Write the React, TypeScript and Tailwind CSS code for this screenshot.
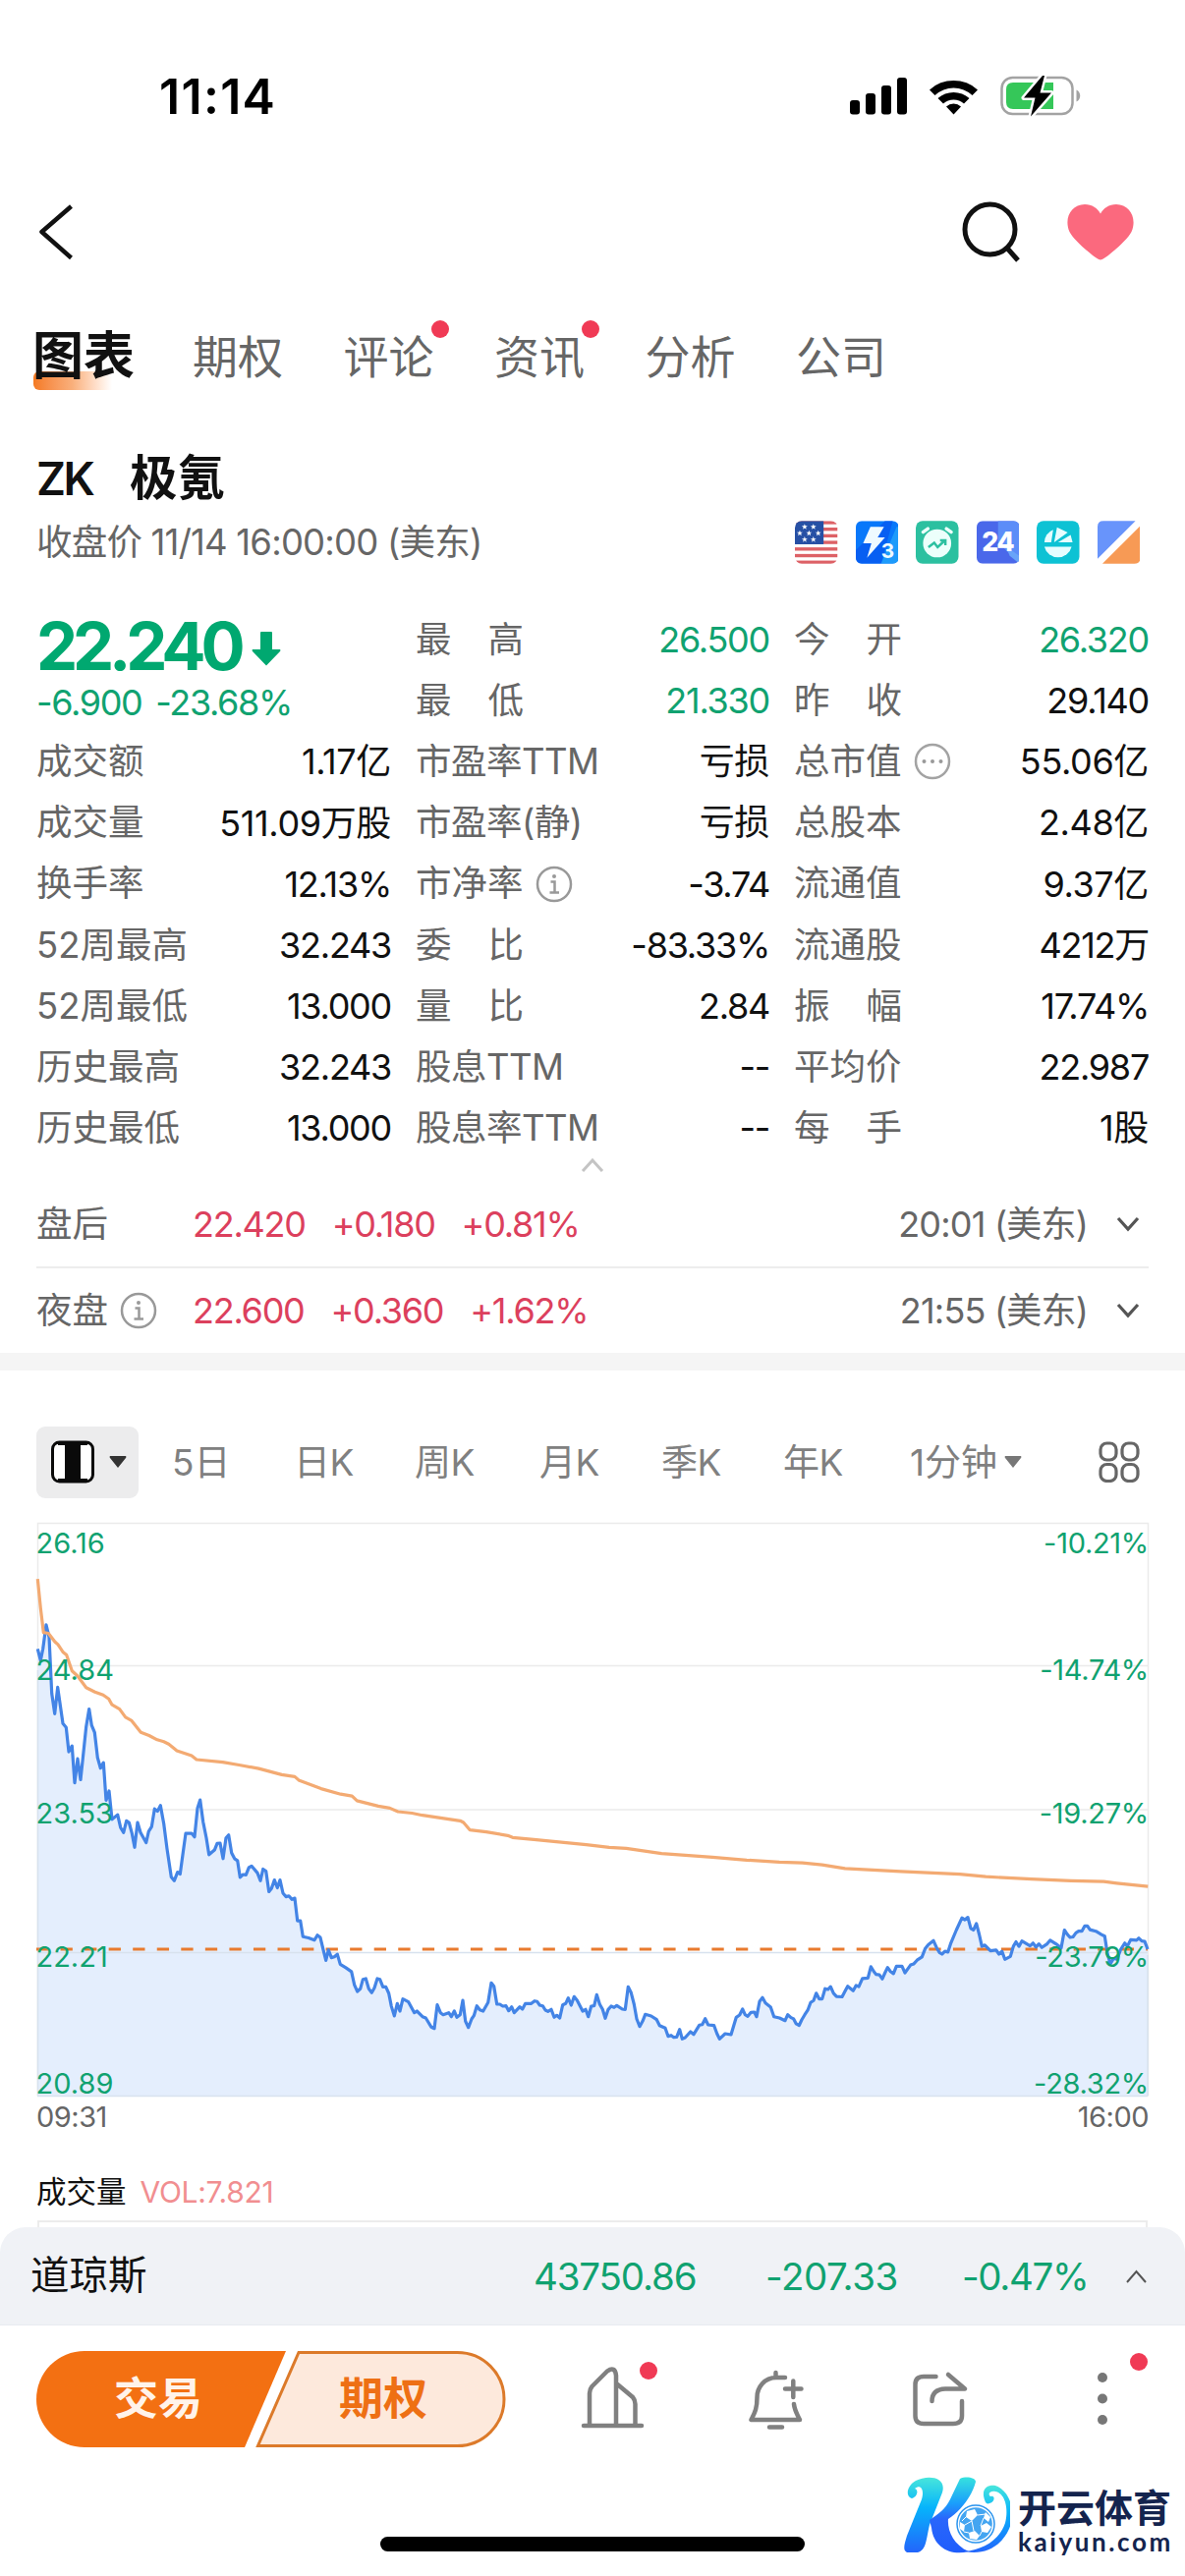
import React from "react";

type Pair = [number, number];

/* ---------- chart data ---------- */

// Each run stores samples on its own grid: origin, scale and "x,y" samples.
type Run = { x: number; y: number; sx: number; sy: number; d: string };

const priceRuns: Run[] = [
  {
    x: 0, y: 1530, sx: 3, sy: 2.529,
    d: "115,375 124,405 131,375 141,313 150,345 158,490 167,542 176,474 192,567 202,577 210,640 220,625 228,720 237,658 246,712 254,648 263,575 272,530 280,572 289,590 298,655 307,682 316,668 324,765 333,741 342,814 359,802 368,835 377,848 386,818 394,822 403,850 411,886 420,822 429,848 446,874 454,845 463,833 472,787 481,793 490,778 500,825 510,890 523,962 532,972 542,950 550,955 558,905 567,850 585,850 594,859 603,785 611,764 620,820 630,862 638,905 655,893 663,876 672,875 681,915 690,862 698,854 707,900 716,915 725,920 733,963 742,956 751,957 760,938 768,934 786,952 795,972 803,942 812,947 821,1000 829,992 838,970 847,990 855,970 864,1004 873,1013 882,1011 891,1020 900,1017 908,1075 917,1075 925,1116 942,1119 960,1125 969,1112 978,1118 987,1150 995,1177 1003,1150 1012,1170 1021,1168 1030,1161 1039,1187 1056,1196 1073,1206 1082,1240 1091,1257 1100,1250 1108,1226 1117,1224 1126,1250 1135,1260 1143,1248 1152,1224 1160,1226 1169,1245 1178,1245 1187,1262 1195,1295 1204,1320",
  },
  {
    x: 400, y: 1700, sx: 3, sy: 3,
    d: "13,1018 21,1041 30,1004 47,1013 65,1046 73,1041 90,1058 100,1062 117,1090 126,1094 135,1022 145,1046 153,1052 170,1046 178,1058 187,1041 195,1060 205,1052 213,1008 221,1072 230,1091 240,1065 247,1055 256,1025 265,1037 275,1041 290,1015 300,955 308,965 317,1020 326,1020 335,1026 345,1025 353,1040 362,1028 370,1046 387,1028 395,1035 404,1018 422,1018 432,1010 440,1012 448,1023 457,1025 465,1038 473,1042 483,1036 492,1060 500,1054 509,1062 518,1022 527,1018 535,1001 544,1023 553,997 562,1008 579,1041 588,1036 596,1058 605,1026 614,1025 622,991 631,1020 640,1036 648,1063 657,1036 666,1026 675,1030 683,1024 700,1035 709,1036 718,967 727,985 736,1020 744,1065 753,1088 762,1072 770,1051 788,1056 805,1067 814,1085 831,1093 840,1118 849,1115 857,1121 866,1120 875,1097 883,1126 892,1122 908,1104 918,1112 935,1084 944,1082 953,1064 962,1083 980,1085 989,1110 997,1126 1014,1110 1032,1113 1048,1060 1058,1053 1067,1035 1075,1052 1083,1057 1093,1045 1103,1044 1110,1058 1119,1012 1128,1000 1137,1016 1153,1029 1163,1058 1180,1062 1197,1070",
  },
  {
    x: 800, y: 1530, sx: 3, sy: 2.412,
    d: "5,1256 15,1263 23,1266 31,1278 40,1282 48,1268 57,1256 66,1245 75,1226 84,1221 92,1203 101,1217 110,1217 119,1192 128,1194 136,1187 145,1203 154,1211 171,1212 180,1198 188,1186 205,1197 214,1184 222,1187 233,1167 250,1166 259,1138 268,1150 275,1157 285,1158 294,1168 302,1153 310,1140 319,1150 328,1155 337,1137 354,1137 363,1153 372,1143 380,1134 390,1131 400,1122 415,1114 425,1093 434,1084 450,1074 460,1092 468,1103 476,1107 485,1100 494,1102 503,1080 520,1048 537,1018 546,1023 555,1017 564,1044 572,1048 581,1032 590,1060 598,1088 607,1085 624,1099 641,1097 650,1107 659,1100 668,1120 685,1113 694,1088 702,1077 711,1088 720,1075 745,1087 754,1080 763,1090 772,1082 781,1091 797,1082 806,1073 824,1082 840,1092 850,1048 858,1058 867,1066 876,1065 885,1055 893,1051 903,1051 912,1038 920,1038 928,1047 946,1051 963,1059 973,1063 981,1105 990,1131 1000,1118 1010,1120 1022,1095 1034,1080 1042,1088 1052,1072 1070,1073 1077,1068 1086,1075 1095,1076 1104,1095",
  },
];

const averageRuns: Run[] = [
  {
    x: 0, y: 1530, sx: 3, sy: 2.529,
    d: "115,195 124,270 133,333 148,335 168,357 177,364 193,384 203,391 220,432 237,445 263,475 290,486 315,494 332,504 342,519 365,530 383,551 402,560 430,590 455,598 480,609 500,614 515,620 540,637 585,650 600,660 680,667 730,674 790,683 860,699 900,704 912,713 980,735 1040,749 1075,754 1090,766 1155,780 1190,785 1215,794 1258,798",
  },
  {
    x: 400, y: 1700, sx: 3, sy: 3,
    d: "90,443 205,460 215,465 235,488 285,494 350,505 365,511 430,517 590,533 660,541 712,544 820,560 975,571 1080,580 1180,586",
  },
  {
    x: 800, y: 1530, sx: 3, sy: 2.412,
    d: "50,883 110,888 180,897 350,904 530,911 610,917 750,923 870,927 970,929 1010,933 1105,941",
  },
];

const toPoints = (runs: Run[]) =>
  runs
    .flatMap((r) =>
      r.d.split(" ").map((p) => {
        const [a, b] = p.split(",").map(Number);
        return `${(r.x + a / r.sx).toFixed(1)},${(r.y + b / r.sy).toFixed(1)}`;
      })
    )
    .join(" ");

const price = toPoints(priceRuns);
const average = toPoints(averageRuns);

const axis: { y: number; left: string; right: string }[] = [
  { y: 1580.5, left: "26.16", right: "-10.21%" },
  { y: 1710, left: "24.84", right: "-14.74%" },
  { y: 1856, left: "23.53", right: "-19.27%" },
  { y: 2001.5, left: "22.21", right: "-23.79%" },
  { y: 2130.5, left: "20.89", right: "-28.32%" },
];

function Chart() {
  return (
    <svg width="1206" height="636" viewBox="0 1540 1206 636" className="block shrink-0 overflow-visible">
      <g stroke="#ebebeb" strokeWidth="1.5" fill="none">
        <path d="M38.500 1550.500H1168.500V2133H38.500Z" />
        <path d="M38 1695.500H1168M38 1842H1168" />
      </g>
      <polygon points={`38.5,2133 ${price} 1168,2133`} fill="#e4eefd" />
      <path d="M38 1987.500H1168M38 2133.500H1168M38.500 1700V2133M1168 1990V2133" stroke="#d8e2ee" strokeWidth="1.5" />
      <path d="M37 1984H1168" stroke="#e87a2e" strokeWidth="3.200" strokeDasharray="12.300 12.250" />
      <polyline points={price} fill="none" stroke="#4384e6" strokeWidth="3.200" strokeLinejoin="round" />
      <polyline points={average} fill="none" stroke="#f3aa72" strokeWidth="3.200" strokeLinejoin="round" />
      <g fontSize="29" fill="#10a270">
        {axis.map((a) => (
          <React.Fragment key={a.left}>
            <text x="36.500" y={a.y}>{a.left}</text>
            <text x="1169" y={a.y} textAnchor="end" letterSpacing="-0.3">{a.right}</text>
          </React.Fragment>
        ))}
      </g>
      <g fontSize="29" letterSpacing="-0.5" fill="#666">
        <text x="37" y="2165">09:31</text>
        <text x="1169" y="2165" textAnchor="end">16:00</text>
      </g>
    </svg>
  );
}

/* ---------- small icons ---------- */

function InfoIcon() {
  return (
    <svg width="38" height="38" viewBox="0 0 38 38" fill="none" stroke="#999" strokeWidth="2.500">
      <circle cx="19" cy="19" r="17" />
      <path d="M15.500 16.500H19.500V27M14.500 27.500H24" />
      <circle cx="19" cy="11" r="2" fill="#999" stroke="none" />
    </svg>
  );
}

function DotsIcon() {
  return (
    <svg width="38" height="38" viewBox="0 0 38 38" fill="#999">
      <circle cx="19" cy="19" r="17" fill="none" stroke="#a3a3a3" strokeWidth="2.500" />
      <circle cx="10.500" cy="19" r="2" />
      <circle cx="19" cy="19" r="2" />
      <circle cx="27.500" cy="19" r="2" />
    </svg>
  );
}

function Chevron() {
  return (
    <svg width="24" height="16" viewBox="0 0 24 16" fill="none" stroke="#555" strokeWidth="3.200">
      <path d="M2 2L12 13L22 2" />
    </svg>
  );
}

function Badges() {
  return (
    <div className="flex gap-[18px]">
      <svg width="43.500" height="44" viewBox="0 0 44 44">
        <clipPath id="flag"><rect width="44" height="44" rx="7" /></clipPath>
        <g clipPath="url(#flag)">
          <rect width="44" height="44" fill="#fff" />
          {[0, 6.8, 13.6, 20.4, 27.2, 34, 40.8].map((y) => (
            <rect key={y} y={y} width="44" height="3.400" fill="#dd6166" />
          ))}
          <rect width="29.500" height="24" fill="#2650a5" />
          {([[10, 6], [19, 6], [5, 12.5], [14.5, 12.5], [24, 12.5], [10, 19], [19, 19]] as Pair[]).map(([x, y]) => (
            <path key={`${x}-${y}`} transform={`translate(${x} ${y})`} fill="#fff"
              d="M0 -3L.8 -.9L3 -.9L1.200 .5L1.900 2.700L0 1.300L-1.900 2.700L-1.200 .5L-3 -.9L-.8 -.9Z" />
          ))}
        </g>
      </svg>
      <svg width="43.500" height="44" viewBox="0 0 44 44">
        <clipPath id="bolt"><rect width="44" height="44" rx="6" /></clipPath>
        <g clipPath="url(#bolt)">
          <rect width="44" height="44" fill="#0878fa" />
          <path d="M0 30L30 0H38L26 44H0Z" fill="#075ff2" />
          <path d="M42 6L26 44H44V6Z" fill="#1d9bfb" />
          <path d="M15 6H29L22.500 17H30L11.500 38L16 23H7.500Z" fill="#effaff" />
        </g>
        <text x="26" y="38.500" fontSize="21" fontWeight="700" fill="#effaff">3</text>
      </svg>
      <svg width="43.500" height="44" viewBox="0 0 44 44">
        <rect width="44" height="44" rx="7" fill="#2cc0a0" />
        <circle cx="22" cy="23" r="14.500" fill="#ecfffb" />
        <path d="M7.500 11.500L12.500 8M36.500 11.500L31.500 8" stroke="#ecfffb" strokeWidth="3.500" strokeLinecap="round" />
        <path d="M13 27L19 22.500L22.500 27L29.500 20.500M25 20H30.500V25" fill="none" stroke="#2cc0a0" strokeWidth="2.500" />
      </svg>
      <svg width="43.500" height="44" viewBox="0 0 44 44">
        <clipPath id="day"><rect width="44" height="44" rx="6" /></clipPath>
        <g clipPath="url(#day)">
          <rect width="44" height="44" fill="#4a68ea" />
          <path d="M22 0H44V44L22 22Z" fill="#5c8df8" />
          <path d="M30 26L44 36V44L34 36Z" fill="#69a4f8" />
        </g>
        <text x="21.500" y="31.500" fontSize="27" fontWeight="800" fill="#fff" textAnchor="middle" letterSpacing="-1.500">24</text>
      </svg>
      <svg width="43.500" height="44" viewBox="0 0 44 44">
        <rect width="44" height="44" rx="7" fill="#0dc2d4" />
        <g fill="#e6fdff">
          <path d="M8 22A14 14 0 0 1 17 9L15 22Z" />
          <path d="M21 6.500L32 12L18 22Z" />
          <path d="M22 22L35 14.500L37 22Z" />
          <path d="M8 26.500H36A14.500 14.500 0 0 1 22 37.500A14.500 14.500 0 0 1 8 26.500Z" />
        </g>
      </svg>
      <svg width="43.500" height="44" viewBox="0 0 44 44">
        <path d="M6 0H39L0 39V6Q0 0 6 0Z" fill="#6894fb" />
        <path d="M44 5V38Q44 44 38 44H5Z" fill="#f79a55" />
      </svg>
    </div>
  );
}

/* ---------- quote table ---------- */

type Stat = { label: string; value: string; green?: boolean; cjk?: boolean; icon?: "info" | "dots" };

const middle: Stat[] = [
  { label: "最 高", value: "26.500", green: true },
  { label: "最 低", value: "21.330", green: true },
  { label: "市盈率TTM", value: "亏损", cjk: true },
  { label: "市盈率(静)", value: "亏损", cjk: true },
  { label: "市净率", value: "-3.74", icon: "info" },
  { label: "委 比", value: "-83.33%" },
  { label: "量 比", value: "2.84" },
  { label: "股息TTM", value: "--" },
  { label: "股息率TTM", value: "--" },
];
const left: Stat[] = [
  { label: "成交额", value: "1.17亿", cjk: true },
  { label: "成交量", value: "511.09万股", cjk: true },
  { label: "换手率", value: "12.13%" },
  { label: "52周最高", value: "32.243" },
  { label: "52周最低", value: "13.000" },
  { label: "历史最高", value: "32.243" },
  { label: "历史最低", value: "13.000" },
];
const right: Stat[] = [
  { label: "今 开", value: "26.320", green: true },
  { label: "昨 收", value: "29.140" },
  { label: "总市值", value: "55.06亿", cjk: true, icon: "dots" },
  { label: "总股本", value: "2.48亿", cjk: true },
  { label: "流通值", value: "9.37亿", cjk: true },
  { label: "流通股", value: "4212万" },
  { label: "振 幅", value: "17.74%" },
  { label: "平均价", value: "22.987" },
  { label: "每 手", value: "1股", cjk: true },
];

function StatRow({ label, value, green, cjk, icon }: Stat) {
  const parts = label.split(" ");
  return (
    <div className="flex h-[62.150px] items-center justify-between whitespace-nowrap text-[36px] leading-none">
      <div className="flex items-center gap-[12px] text-[#666]">
        {parts.length === 2 ? (
          <span className="flex w-[110px] justify-between text-[36.500px]">
            <span>{parts[0]}</span>
            <span>{parts[1]}</span>
          </span>
        ) : (
          <span className={/[A-Z(]/.test(label) ? "tracking-[-0.5px] text-[36.500px]" : "text-[36.500px]"}>{label}</span>
        )}
        {icon === "info" && <InfoIcon />}
        {icon === "dots" && <DotsIcon />}
      </div>
      <span className={`${green ? "text-[#10a270]" : "text-[#111]"} ${cjk ? "tracking-[-0.010em]" : "tracking-[-0.035em]"}`}>{value}</span>
    </div>
  );
}

function ExtendedRow({ name, info, values, time }: { name: string; info?: boolean; values: string[]; time: string }) {
  return (
    <div className="flex h-[86px] items-center justify-between whitespace-nowrap text-[36px] leading-none text-[#666]">
      <div className="flex items-center">
        <div className="flex w-[159px] items-center gap-[12px]">
          <span className="text-[36.500px]">{name}</span>
          {info && <InfoIcon />}
        </div>
        <div className="flex gap-[27px] tracking-[-0.035em] text-[#dc405d]">
          {values.map((v) => <span key={v}>{v}</span>)}
        </div>
      </div>
      <div className="flex items-center gap-[29px] pr-[9px]">
        <span className="tracking-[-0.8px]">{time}</span>
        <Chevron />
      </div>
    </div>
  );
}

/* ---------- header ---------- */

function StatusBar() {
  return (
    <div className="flex h-[196px] shrink-0 items-center justify-between pl-[162px] pr-[104px]">
      <span className="text-[50px] font-semibold leading-none tracking-[1.300px] text-black">11:14</span>
      <svg width="238" height="44" viewBox="864 76 238 44">
        <g>
          <rect x="865" y="102" width="10" height="14.500" rx="3" />
          <rect x="881" y="95" width="10" height="21.500" rx="3" />
          <rect x="897" y="87" width="10" height="29.500" rx="3" />
          <rect x="913" y="79" width="10" height="37.500" rx="3" />
        </g>
        <g>
          <path d="M946 91.500A36 36 0 0 1 995 91.500L989.500 97A28 28 0 0 0 951.500 97Z" strokeLinejoin="round" />
          <path d="M954.500 100A24 24 0 0 1 986.500 100L981 105.500A16 16 0 0 0 960 105.500Z" />
          <path d="M963 108.500A11 11 0 0 1 978 108.500L970.500 116.500Z" />
        </g>
        <rect x="1019.500" y="79" width="72" height="37" rx="11" fill="none" stroke="#a3a3a3" strokeWidth="2.500" />
        <path d="M1095.500 91.500C1100.500 93.500 1100.500 101.500 1095.500 103.500Z" fill="#a3a3a3" />
        <path d="M1031 84H1072V111H1031Q1024 111 1024 104V91Q1024 84 1031 84Z" fill="#35c759" />
        <path d="M1061 77L1042 99.500H1053.500L1049 118.500L1070 94.500H1058.500L1063 77Z" fill="#000" stroke="#fff" strokeWidth="5" paintOrder="stroke" strokeLinejoin="round" />
      </svg>
    </div>
  );
}

function NavBar() {
  return (
    <div className="flex h-[80px] shrink-0 items-center justify-between pl-[38px] pr-[51px]">
      <svg width="38" height="60" viewBox="0 0 38 60" fill="none" stroke="#111" strokeWidth="4.500">
        <path d="M34.500 4L4.500 30L34.500 56.500" strokeLinejoin="round" />
      </svg>
      <div className="flex items-center gap-[46px]">
        <svg width="60" height="62" viewBox="0 0 60 62" fill="none" stroke="#111" strokeWidth="5">
          <circle cx="28.500" cy="28.500" r="25.500" />
          <path d="M46 47.500L57 60" />
        </svg>
        <svg width="70" height="58" viewBox="0 0 70 58" fill="#fb697e">
          <path d="M35 57.500C31 57.500 8 38 3.500 29C-2.500 15.500 5 1 19 1C26.500 1 32 5 35 10.500C38 5 43.500 1 51 1C65 1 72.500 15.500 66.500 29C62 38 39 57.500 35 57.500Z" />
        </svg>
      </div>
    </div>
  );
}

function Dot({ className }: { className: string }) {
  return <span className={`absolute size-[18px] rounded-full bg-[#f03a55] ${className}`} />;
}

function Tabs() {
  const tabs = ["期权", "评论", "资讯", "分析", "公司"];
  return (
    <div className="flex h-[172px] shrink-0 items-center pl-[34px] pt-[2px] leading-none">
      <div className="relative w-[162px]">
        <span className="absolute -bottom-[8px] left-0 h-[19px] w-[80px] rounded-l-[6px] bg-linear-to-r from-[#f47a20] via-[#f9b07c] to-white" />
        <span className="relative -ml-[1px] text-[52px] font-bold text-[#111]">图表</span>
      </div>
      <div className="flex gap-[61.500px] text-[46px] text-[#666]">
        {tabs.map((t, i) => (
          <span key={t} className="relative">
            {t}
            {(i === 1 || i === 2) && <Dot className="-right-[15px] -top-[14px]" />}
          </span>
        ))}
      </div>
    </div>
  );
}

/* ---------- period bar ---------- */

function PeriodBar() {
  return (
    <div className="flex h-[145px] shrink-0 items-center whitespace-nowrap pl-[37px] pt-[41px] text-[37px] leading-none text-[#808080]">
      <div className="flex h-[73px] w-[104px] items-center gap-[15px] rounded-[9px] bg-[#ececed] pl-[15px]">
        <svg width="44" height="44" viewBox="0 0 44 44">
          <rect x="1.500" y="2" width="41" height="40" rx="7" fill="#fff" stroke="#0a0a0a" strokeWidth="3" />
          <path d="M14 1H30V43H14ZM7 1H37V5H7ZM7 39H37V43H7Z" fill="#0a0a0a" />
        </svg>
        <svg width="18" height="12" viewBox="0 0 18 12"><path d="M1 0H17Q18 1 17 2L9 12L1 2Q0 1 1 0Z" fill="#333" /></svg>
      </div>
      <span className="ml-[34px] w-[124px]">5日</span>
      <span className="w-[123px] tracking-[-0.5px]">日K</span>
      <span className="w-[127px] tracking-[-0.5px]">周K</span>
      <span className="w-[124px] tracking-[-0.5px]">月K</span>
      <span className="w-[124px] tracking-[-0.5px]">季K</span>
      <span className="w-[129px] tracking-[-0.5px]">年K</span>
      <div className="flex w-[192px] items-center gap-[7px]">
        <span>1分钟</span>
        <svg width="18" height="12" viewBox="0 0 18 12"><path d="M1 0H17Q18 1 17 2L9 12L1 2Q0 1 1 0Z" fill="#777" /></svg>
      </div>
      <svg width="42" height="42" viewBox="0 0 42 42" fill="none" stroke="#666" strokeWidth="3.200">
        <rect x="2" y="2" width="16" height="17" rx="6.500" />
        <rect x="24" y="2" width="16" height="17" rx="6.500" />
        <rect x="2" y="23.500" width="16" height="17" rx="6.500" />
        <rect x="24" y="23.500" width="16" height="17" rx="6.500" />
      </svg>
    </div>
  );
}

/* ---------- bottom ---------- */

function Watermark() {
  return (
    <div className="absolute bottom-[11px] left-[910px] flex h-[100px] w-[296px] text-[#14244e]">
      <svg width="118" height="100" viewBox="0 0 118 100" className="shrink-0">
        <defs>
          <linearGradient id="k" x1="0" y1="0" x2="0" y2="1">
            <stop offset="0" stopColor="#48e6dc" />
            <stop offset=".4" stopColor="#06b4fb" />
            <stop offset="1" stopColor="#2365fb" />
          </linearGradient>
          <linearGradient id="k2" x1="0" y1="0" x2="0" y2="1">
            <stop offset="0" stopColor="#35e2df" />
            <stop offset=".35" stopColor="#1a9dfc" />
            <stop offset=".55" stopColor="#2a66fb" />
            <stop offset="1" stopColor="#1f5dfc" />
          </linearGradient>
        </defs>
        <path fill="url(#k)" d="M18 33C11 31 13 20 22 15C33 9 54 10 49 27L36 60C32 77 33 85 24 88L13 88C8 86 11 78 13 71L28 34C31 24 27 18 21 23C25 24 24 31 18 33Z" />
        <path fill="url(#k2)" d="M67 13C73 10 83 12 83 16C80 29 68 46 55 54C54 65 60 80 76 87C58 92 40 83 38 63L36 55C45 49 52 44 57 34Z" />
        <path fill="url(#k)" d="M93 37C87 23 95 19 103 20C117 25 125 45 117 64C109 82 92 91 72 87C90 85 107 76 113 58C117 42 112 27 103 26C97 25 95 29 98 31C103 29 103 37 97 38C95 39 94 38 93 37Z" />
        <circle cx="83" cy="59" r="19" fill="#fff" stroke="#2b94ee" strokeWidth="1.500" />
        <circle cx="83" cy="59" r="16.800" fill="#44a5f1" />
        <g fill="#fff" transform="translate(-1 2)">
          <path d="M75 44L83 42L86 48L80 54L74 50Z" />
          <path d="M94 45L99 50L97 55L92 51Z" />
          <path d="M68 55L73 58L72 65L68 62Z" />
          <path d="M89 59L95 56L100 60L96 66L90 65Z" />
          <path d="M77 66L83 64L88 69L85 73L78 72Z" />
        </g>
        <path transform="translate(-1 2)" d="M86 48L94 47M80 54L82 64M74 50L70 54M73 58L80 54M92 51L89 59M72 65L77 66M90 65L88 69" stroke="#fff" strokeWidth="1" fill="none" />
      </svg>
      <div className="flex flex-col pl-[8px] pt-[23px] leading-none">
        <span className="text-[39px] font-bold">开云体育</span>
        <span className="mt-[2px] font-['Lato',sans-serif] text-[26px] font-bold tracking-[2.600px]">kaiyun.com</span>
      </div>
    </div>
  );
}

function ActionBar() {
  return (
    <div className="relative h-[255px] shrink-0 border-t border-[#e8eaf0] bg-white">
      <div className="flex h-[150px] items-center pl-[37px]">
        <div className="relative h-[98px] w-[478px]">
          <svg width="478" height="98" viewBox="37 2393 478 98" className="block">
            <path d="M86 2393H291L249 2491H86A49 49 0 0 1 86 2393Z" fill="#f37012" />
            <path d="M304 2394.500H465.500A47.500 47.500 0 0 1 465.500 2489.500H262.500Z" fill="#fde9dc" stroke="#dc7a2a" strokeWidth="3" />
          </svg>
          <div className="absolute inset-0 flex items-center pb-[2px] text-[45px] font-bold leading-none">
            <span className="pl-[79px] text-[#fff3ea]">交易</span>
            <span className="pl-[139px] text-[#ee7014]">期权</span>
          </div>
        </div>
        <svg width="66" height="80" viewBox="590 2402 66 80" className="ml-[75px]" fill="none" stroke="#808080" strokeWidth="4.500" strokeLinecap="round" strokeLinejoin="round">
          <path d="M594 2469H653M600 2467V2436Q600 2432 602.500 2429L618 2413.500Q626 2408 627 2418V2467M628.500 2427L644 2440Q646.500 2443 646.500 2447V2467" />
        </svg>
        <svg width="60" height="80" viewBox="760 2402 60 80" className="ml-[104px]" fill="none" stroke="#808080" strokeWidth="4.500" strokeLinecap="round" strokeLinejoin="round">
          <path d="M789.500 2415V2420M799 2420H790C778 2420 770.500 2430 770.500 2440C770.500 2452 768 2456 764.500 2463H814C811 2457 808.500 2453 808 2447M799 2431.500H815.500M807.300 2423.500V2440M783 2470.500H796" />
        </svg>
        <svg width="60" height="80" viewBox="926 2402 60 80" className="ml-[106px]" fill="none" stroke="#808080" strokeWidth="4.500" strokeLinecap="round" strokeLinejoin="round">
          <path d="M952.500 2419H940Q931.500 2419 931.500 2427V2459Q931.500 2467 940 2467H970Q979 2467 979 2459V2444M965 2417L982 2431.500H962Q948.500 2432 948.500 2444" />
        </svg>
        <svg width="20" height="80" viewBox="1112.500 2402 20 80" className="ml-[126px]" fill="#777">
          <circle cx="1122.500" cy="2420" r="5" />
          <circle cx="1122.500" cy="2441.500" r="5" />
          <circle cx="1122.500" cy="2463" r="5" />
        </svg>
      </div>
      <Dot className="left-[651px] top-[37px]" />
      <Dot className="left-[1150px] top-[28px]" />
      <div className="absolute bottom-[24px] left-[387px] h-[15px] w-[432px] rounded-full bg-black" />
      <Watermark />
    </div>
  );
}

export default function App() {
  return (
    <div className="flex h-[2622px] w-[1206px] flex-col overflow-hidden bg-white font-['Inter','Noto_Sans_CJK_SC',sans-serif]">
      <StatusBar />
      <NavBar />
      <Tabs />

      <div className="flex h-[78px] shrink-0 items-center pl-[37px] text-[#111]">
        <span className="w-[95px] text-[46px] font-semibold leading-none tracking-[-2.500px]">ZK</span>
        <span className="text-[48.500px] font-bold leading-none">极氪</span>
      </div>
      <div className="flex h-[52px] shrink-0 items-center justify-between pl-[37px] pr-[46px]">
        <span className="text-[36.500px] leading-none tracking-[-0.800px] text-[#666]">收盘价 11/14 16:00:00 (美东)</span>
        <Badges />
      </div>

      <div className="mt-[42px] flex shrink-0 pl-[37px]">
        <div className="w-[361px]">
          <div className="flex h-[124.300px] flex-col text-[#00a870]">
            <div className="flex items-center gap-[9px] pt-[4px]">
              <span className="text-[67px] font-bold leading-[68px] tracking-[-0.077em]">22.240</span>
              <svg width="30" height="36" viewBox="0 0 30 36" fill="#00a870" className="mt-[4px] ml-[3px]">
                <path d="M10 1H20Q21 1 21 2V19H29Q30 20 29 21L15 35.500L1 21Q0 20 1 19H9V2Q9 1 10 1Z" />
              </svg>
            </div>
            <div className="flex gap-[14px] pt-[5px] text-[36px] leading-none tracking-[-0.038em] text-[#10a270]">
              <span>-6.900</span>
              <span>-23.68%</span>
            </div>
          </div>
          {left.map((s) => <StatRow key={s.label} {...s} />)}
        </div>
        <div className="ml-[25px] w-[360px]">
          {middle.map((s) => <StatRow key={s.label} {...s} />)}
        </div>
        <div className="ml-[25px] w-[361px]">
          {right.map((s) => <StatRow key={s.label} {...s} />)}
        </div>
      </div>
      <div className="flex h-[23px] shrink-0 justify-center">
        <svg width="24" height="14" viewBox="0 0 24 14" fill="none" stroke="#c4c4c4" strokeWidth="3">
          <path d="M2 13L12 2L22 13" />
        </svg>
      </div>

      <div className="shrink-0 px-[37px] pt-[1px]">
        <ExtendedRow name="盘后" values={["22.420", "+0.180", "+0.81%"]} time="20:01 (美东)" />
        <div className="h-[2px] bg-[#ededed]" />
        <ExtendedRow name="夜盘" info values={["22.600", "+0.360", "+1.62%"]} time="21:55 (美东)" />
      </div>
      <div className="h-[18px] shrink-0 bg-[#f5f5f5]" />

      <PeriodBar />
      <Chart />

      <div className="flex h-[84px] shrink-0 items-end gap-[14px] pb-[14px] pl-[37px] text-[30.500px] leading-none">
        <span className="text-[#111]">成交量</span>
        <span className="text-[30px] tracking-[-0.010em] text-[#f18e90]">VOL:7.821</span>
      </div>
      <div className="mx-[38px] h-[30px] shrink-0 border-x-2 border-t-2 border-[#ececec]" />
      <div className="relative -mt-[23px] flex h-[99px] shrink-0 items-center rounded-t-[26px] bg-[#f0f2f6] pl-[31px] pr-[39px] text-[38.500px] leading-none text-[#10a270]">
        <span className="flex-1 text-[39.500px] text-[#111]">道琼斯</span>
        <span className="w-[236px] tracking-[-0.030em]">43750.86</span>
        <span className="w-[200px] tracking-[-0.012em]">-207.33</span>
        <span className="w-[167px] tracking-[-0.035em]">-0.47%</span>
        <svg width="21" height="14" viewBox="0 0 21 14" fill="none" stroke="#555" strokeWidth="2">
          <path d="M1 13L10.500 2L20 13" />
        </svg>
      </div>
      <ActionBar />
    </div>
  );
}
